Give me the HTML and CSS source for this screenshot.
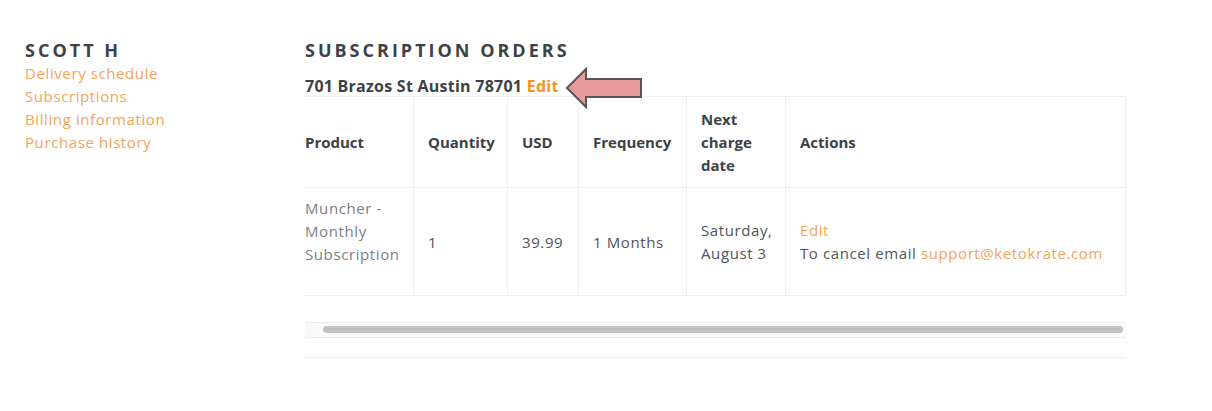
FILE: index.html
```html
<!DOCTYPE html>
<html lang="en">
<head>
    <meta charset="UTF-8">
    <meta name="viewport" content="width=device-width, initial-scale=1.0">
    <title>Subscription Orders</title>
    <link rel="stylesheet" href="styles.css">
</head>
<body>
    <div class="page">
        <aside class="sidebar">
            <h3>Scott H</h3>
            <a href="#">Delivery schedule</a>
            <a href="#">Subscriptions</a>
            <a href="#">Billing information</a>
            <a href="#">Purchase history</a>
        </aside>

        <main class="orders">
            <h2>Subscription Orders</h2>
            <div class="address">
                701 Brazos St Austin 78701 <a href="#">Edit</a>
                <svg class="pointer" width="80" height="42" viewBox="0 0 80 42">
                    <path d="M3 21 L22 2 L22 12 L77 12 L77 30 L22 30 L22 40 Z" fill="#e8999a" stroke="#555" stroke-width="2" stroke-linejoin="miter"/>
                </svg>
            </div>

            <div class="table-scroll" id="tableScroll">
                <table>
                    <colgroup>
                        <col style="width: 123px">
                        <col style="width: 94px">
                        <col style="width: 71px">
                        <col style="width: 108px">
                        <col style="width: 99px">
                        <col style="width: 340px">
                    </colgroup>
                    <thead>
                        <tr>
                            <th>Product</th>
                            <th>Quantity</th>
                            <th>USD</th>
                            <th>Frequency</th>
                            <th>Next charge date</th>
                            <th>Actions</th>
                        </tr>
                    </thead>
                    <tbody>
                        <tr>
                            <td class="product">Muncher - Monthly Subscription</td>
                            <td>1</td>
                            <td>39.99</td>
                            <td>1 Months</td>
                            <td>Saturday, August 3</td>
                            <td>
                                <a href="#">Edit</a><br>
                                To cancel email <a href="#">support@ketokrate.com</a>
                            </td>
                        </tr>
                    </tbody>
                </table>
            </div>
            <div class="scrollbar">
                <div class="scrollbar-thumb"></div>
            </div>
        </main>
    </div>

    <script src="app.js"></script>
</body>
</html>
```

FILE: styles.css
```css
body {
    margin: 0;
    background-color: #fff;
    font-family: 'Open Sans', 'Noto Sans', sans-serif;
    font-size: 15px;
    color: #3d4246;
}

a {
    color: #f5a35a;
    text-decoration: none;
}

.page {
    display: flex;
    padding: 39px 0 0 25px;
}

.sidebar {
    width: 280px;
    display: flex;
    flex-direction: column;
    line-height: 23px;
    letter-spacing: 0.6px;
}

.sidebar h3,
.orders h2 {
    margin: 0;
    font-size: 18px;
    line-height: 23px;
    font-weight: 700;
    letter-spacing: 3px;
    text-transform: uppercase;
    color: #3d4246;
}

.orders {
    width: 821px;
    padding-bottom: 19px;
    border-bottom: 1px solid #f0f0f0;
}

.address {
    position: relative;
    margin-top: 14px;
    font-size: 16px;
    line-height: 20px;
    font-weight: 700;
    letter-spacing: 0.25px;
}

.address a {
    color: #f7931e;
}

.pointer {
    position: absolute;
    left: 259px;
    top: -9px;
}

.table-scroll {
    overflow: hidden;
}

table {
    width: 836px;
    table-layout: fixed;
    border-collapse: collapse;
    margin-bottom: 26px;
    line-height: 23px;
}

th,
td {
    border: 1px solid #efefef;
    text-align: left;
    vertical-align: middle;
}

th {
    padding: 11px 14px 10px;
    font-weight: 700;
    color: #3d4246;
}

td {
    padding: 9px 14px 8px;
    color: #4f555b;
    letter-spacing: 0.6px;
}

td.product {
    padding-bottom: 29px;
    color: #7b8187;
}

.scrollbar {
    box-sizing: border-box;
    height: 16px;
    padding: 3px 3px 4px 18px;
    background-color: #fafafa;
    border-top: 1px solid #ececec;
    border-bottom: 1px solid #ececec;
}

.scrollbar-thumb {
    height: 7px;
    border-radius: 4px;
    background-color: #c1c1c1;
}
```

FILE: app.js
```js
// table sits scrolled to the far right
var tableScroll = document.getElementById('tableScroll');
tableScroll.scrollLeft = tableScroll.scrollWidth;
```
